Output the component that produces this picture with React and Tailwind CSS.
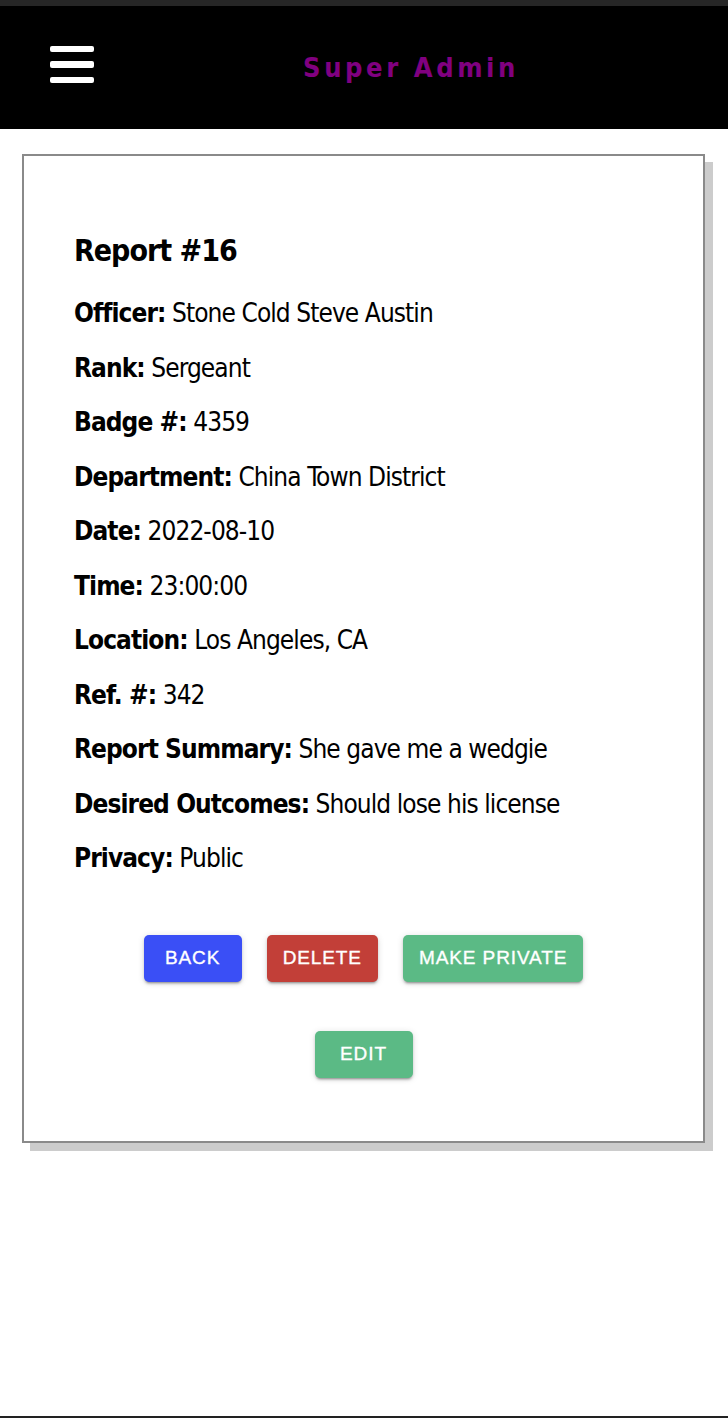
import React from "react";

const rows = [
  ["Officer:", "Stone Cold Steve Austin"],
  ["Rank:", "Sergeant"],
  ["Badge #:", "4359"],
  ["Department:", "China Town District"],
  ["Date:", "2022-08-10"],
  ["Time:", "23:00:00"],
  ["Location:", "Los Angeles, CA"],
  ["Ref. #:", "342"],
  ["Report Summary:", "She gave me a wedgie"],
  ["Desired Outcomes:", "Should lose his license"],
  ["Privacy:", "Public"],
];

function Btn({ children, color }) {
  return (
    <button
      className={`h-[47px] min-w-[98px] px-[16px] rounded-[5px] text-white text-[19px] tracking-[0.9px] uppercase [-webkit-text-stroke:0.35px_white] shadow-[0_3px_2px_-2px_rgba(0,0,0,0.25),0_2px_3px_0_rgba(0,0,0,0.16),0_1px_7px_0_rgba(0,0,0,0.12)] ${color}`}
      style={{ fontFamily: '"Liberation Sans", Arial, sans-serif' }}
    >
      {children}
    </button>
  );
}

export default function App() {
  return (
    <div
      className="h-[1418px] flex flex-col bg-white border-b-2 border-[#222]"
      style={{ fontFamily: '"DejaVu Sans Condensed", "DejaVu Sans", sans-serif' }}
    >
      <div className="h-[6px] bg-[#262626]" />
      <header className="h-[123px] bg-black flex items-center">
        <div className="ml-[50px] w-[44px] flex flex-col gap-[9px] mb-[6px]">
          <span className="block h-[6.5px] rounded-[2px] bg-white" />
          <span className="block h-[6.5px] rounded-[2px] bg-white" />
          <span className="block h-[6.5px] rounded-[2px] bg-white" />
        </div>
        <h1 className="flex-1 text-center text-[27px] font-bold tracking-[3.6px] text-[#800080] mt-[2px]">
          Super Admin
        </h1>
      </header>
      <main className="pt-[25px] pl-[22px] pr-[23px]">
        <div className="border-2 border-[#8a8a8a] shadow-[8px_8px_0_#cccccc] pt-[75px] pb-[63px] pl-[50px] pr-[20px]">
          <h2 className="text-[30px] font-bold leading-[40px] tracking-[-1px] text-black mb-[15px]">
            Report #16
          </h2>
          {rows.map(([k, v]) => (
            <p key={k} className="text-[26px] leading-[54.5px] tracking-[-0.92px] text-black whitespace-nowrap">
              <span className="font-bold">{k}</span> {v}
            </p>
          ))}
          <div className="mt-[49px] flex flex-col items-center gap-[49px] -ml-[30px]">
            <div className="flex gap-[25px]">
              <Btn color="bg-[#3a4ff6]">Back</Btn>
              <Btn color="bg-[#c23f38]">Delete</Btn>
              <Btn color="bg-[#5bba85]">Make Private</Btn>
            </div>
            <Btn color="bg-[#5bba85]">Edit</Btn>
          </div>
        </div>
      </main>
    </div>
  );
}
